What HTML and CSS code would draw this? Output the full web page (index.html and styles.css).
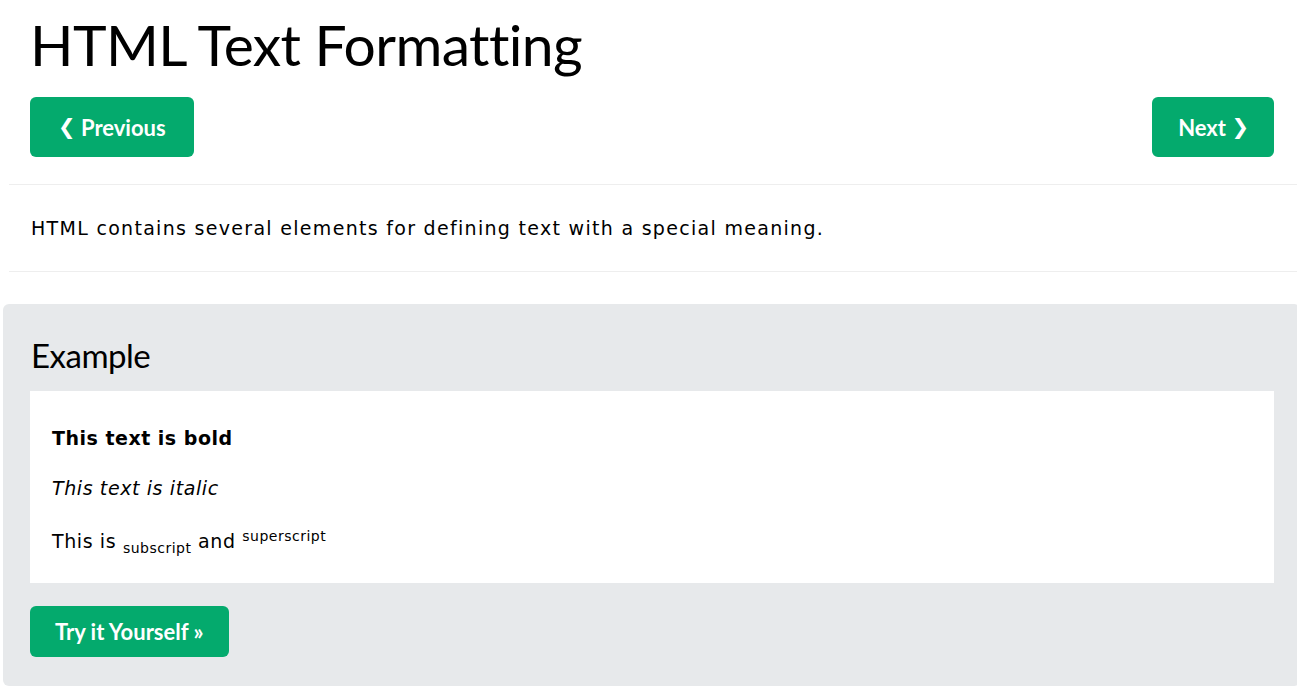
FILE: index.html
```html
<!DOCTYPE html>
<html lang="en">
<head>
<meta charset="utf-8">
<title>HTML Text Formatting</title>
<link rel="stylesheet" href="styles.css">
</head>
<body>
<div class="top">
  <h1 class="title">HTML Text Formatting</h1>
  <div class="nav">
    <a class="btn btn-prev" href="#"><span class="chev">&#10094;</span> Previous</a>
    <a class="btn btn-next" href="#">Next <span class="chev">&#10095;</span></a>
  </div>
</div>
<hr class="rule rule-first">
<p class="intro">HTML contains several elements for defining text with a special meaning.</p>
<hr class="rule">
<div class="example">
  <h2 class="example-title">Example</h2>
  <div class="example-box">
    <p class="line"><b>This text is bold</b></p>
    <p class="line"><i>This text is italic</i></p>
    <p class="line line-script">This is <sub>subscript</sub> and <sup>superscript</sup></p>
  </div>
  <a class="btn btn-try" href="#">Try it Yourself &raquo;</a>
</div>
</body>
</html>
```

FILE: styles.css
```css
html, body {
  margin: 0;
  padding: 0;
  background: #fff;
  overflow: hidden;
}
body {
  font-family: "DejaVu Sans", Verdana, sans-serif;
  font-size: 19px;
  letter-spacing: 1.3px;
  color: #000;
  width: 1297px;
}
.top {
  padding: 0 23px 0 30px;
}
.title {
  font-family: "Lato", "Noto Sans", sans-serif;
  font-weight: 400;
  font-variant-ligatures: none;
  letter-spacing: -0.6px;
  font-size: 57px;
  line-height: 72px;
  margin: 8px 0 17px 0;
}
.nav {
  display: flex;
  justify-content: space-between;
}
.btn {
  display: inline-flex;
  align-items: center;
  justify-content: center;
  height: 60px;
  padding: 0 26px;
  box-sizing: border-box;
  background: #04AA6D;
  color: #fff;
  text-decoration: none;
  border-radius: 6px;
  font-family: "Lato", sans-serif;
  font-weight: 700;
  font-size: 22px;
  letter-spacing: 0;
  white-space: pre;
}
.btn-prev {
  padding: 0 28px 0 28px;
}
.btn-next {
  padding: 0 25px 0 26px;
}
.chev {
  font-family: "DejaVu Sans", sans-serif;
  font-weight: 700;
  font-size: 21px;
}
.rule {
  border: 0;
  border-top: 1px solid #eeeeee;
  margin: 0 0 0 9px;
}
.rule-first {
  margin-top: 27px;
}
.intro {
  margin: 0;
  padding: 0 0 0 31px;
  height: 86px;
  line-height: 86px;
}
.example {
  margin: 32px -3px 0 3px;
  background: #E7E9EB;
  border-radius: 6px;
  padding: 1px 26px 29px 27px;
}
.example-title {
  font-family: "Lato", "Noto Sans", sans-serif;
  font-weight: 400;
  letter-spacing: -0.5px;
  font-size: 33px;
  margin: 28px 0 14px 1px;
  line-height: 44px;
}
.example-box {
  background: #fff;
  padding: 22px 22px 17px;
  letter-spacing: 0.6px;
}
.example-box b {
  letter-spacing: 0.5px;
}
.line {
  margin: 0;
  line-height: 50px;
  font-size: 19px;
}
.line-script {
  padding-top: 3px;
}
sub, sup {
  font-size: 14px;
  line-height: 0;
  letter-spacing: 0.5px;
}
.btn-try {
  margin-top: 23px;
  height: 51px;
  padding: 0 25px;
  font-size: 22px;
}
```
